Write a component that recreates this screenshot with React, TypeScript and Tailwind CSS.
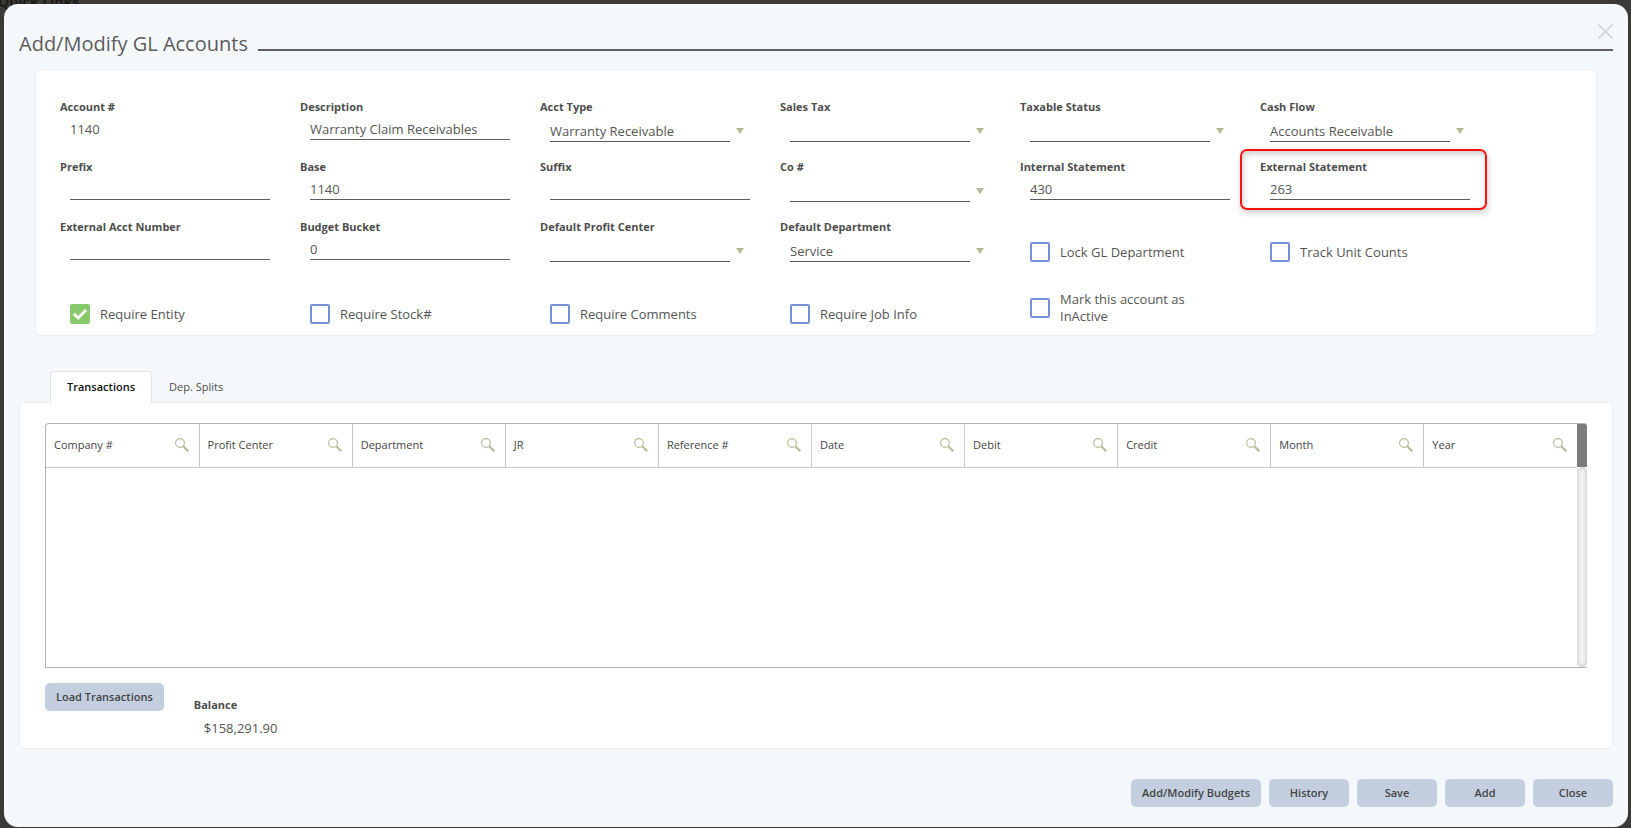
import { useId, useState } from "react";
import type { ReactNode } from "react";

const labelClass = "block text-[11px] leading-4 font-bold text-[#4d4d4d]";
const valueClass = "text-[13px] text-[#555]";

function TextField({ label, value = "", readOnly = false }: { label: string; value?: string; readOnly?: boolean }) {
  const id = useId();
  return (
    <div className="flex flex-col">
      <label htmlFor={id} className={labelClass}>{label}</label>
      <input
        id={id}
        type="text"
        defaultValue={value}
        readOnly={readOnly}
        className={`mt-1 ml-[10px] h-[21px] w-[200px] rounded-none border-b bg-transparent p-0 outline-none ${readOnly ? "border-transparent" : "border-[#5c5c5c]"} ${valueClass}`}
      />
    </div>
  );
}

function SelectField({ label, value = "" }: { label: string; value?: string }) {
  const id = useId();
  return (
    <div className="flex flex-col">
      <label htmlFor={id} className={labelClass}>{label}</label>
      <div className="mt-1 ml-[10px] flex items-center">
        <select
          id={id}
          defaultValue={value}
          className={`h-[23px] w-[180px] appearance-none rounded-none border-b border-[#5c5c5c] bg-transparent px-0 pt-[3px] pb-0 outline-none ${valueClass}`}
        >
          <option value={value}>{value}</option>
        </select>
        <svg aria-hidden="true" className="ml-[6px] h-[6px] w-2 fill-[#b3ba94]" viewBox="0 0 8 6">
          <path d="M0 0h8L4 6z" />
        </svg>
      </div>
    </div>
  );
}

function CheckField({ label, checked = false }: { label: string; checked?: boolean }) {
  return (
    <label className={`ml-[10px] flex w-[180px] items-center gap-[10px] leading-[17px] ${valueClass}`}>
      <span className="grid shrink-0">
        <input
          type="checkbox"
          defaultChecked={checked}
          className="peer col-start-1 row-start-1 size-5 appearance-none rounded-[2px] border-2 border-[#7491d6] bg-white checked:border-[#86ca6b] checked:bg-[#86ca6b]"
        />
        <svg
          aria-hidden="true"
          viewBox="0 0 20 20"
          className="pointer-events-none invisible col-start-1 row-start-1 size-5 fill-none stroke-white stroke-[2.8] peer-checked:visible"
        >
          <path d="M3.8 9.8l4.4 4.2L16 6" />
        </svg>
      </span>
      <span>{label}</span>
    </label>
  );
}

function Button({ children }: { children: ReactNode }) {
  return (
    <button type="button" className="h-7 min-w-20 rounded-[5px] bg-[#c3cfdf] px-[11px] text-[11px] font-semibold text-[#444]">
      {children}
    </button>
  );
}

function SearchIcon() {
  return (
    <svg aria-hidden="true" viewBox="0 0 14 14" className="size-[14px] fill-none stroke-[#b5bb98]">
      <circle cx="5" cy="5" r="4.4" strokeWidth="1.1" />
      <path d="M8.3 8.3L13.3 13.3" strokeWidth="2" />
    </svg>
  );
}

const columns = ["Company #", "Profit Center", "Department", "JR", "Reference #", "Date", "Debit", "Credit", "Month", "Year"];

function TransactionsTable() {
  return (
    <div className="flex h-[245px]">
      <div className="flex-1 rounded-tl-[4px] border border-r-0 border-[#b4b4b4]">
        <table className="w-full table-fixed border-collapse">
          <thead>
            <tr className="h-[43px] border-b border-[#c8c8c8]">
              {columns.map((name) => (
                <th key={name} scope="col" className="border-r border-[#c8c8c8] pr-[10px] pl-2 text-left text-[11px] font-normal text-[#444] last:border-r-0">
                  <div className="flex items-center justify-between">
                    <span>{name}</span>
                    <button type="button" aria-label={`Search ${name}`}><SearchIcon /></button>
                  </div>
                </th>
              ))}
            </tr>
          </thead>
          <tbody />
        </table>
      </div>
      <div className="flex w-[10px] flex-col border-b border-[#b4b4b4]">
        <div className="h-11 rounded-tr-[3px] border-t border-[#b4b4b4] bg-[#7c7c7c]" />
        <div className="flex-1 rounded-[5px] bg-[#f3f3f3] shadow-[inset_0_0_4px_#b8b8b8]" />
      </div>
    </div>
  );
}

export default function App() {
  const [tab, setTab] = useState("Transactions");
  return (
    <div className="relative min-h-screen overflow-hidden bg-[#3b3a38] pt-1 pr-[3px] pb-px pl-1 font-['Open_Sans',sans-serif]">
      <div aria-hidden="true" className="absolute -top-2 -left-[2px] text-[14px] leading-5 font-bold text-[#1c1b1a]">Quick Links</div>
      <main className="relative flex min-h-[calc(100vh-5px)] flex-col rounded-[14px] bg-[#f4f8fb] px-[15px]">
        <header className="flex h-[65px] items-start">
          <h1 className="pt-[25px] text-[20px] leading-[30px] text-[#5c5c5c]">Add/Modify GL Accounts</h1>
          <div className="mt-[45px] ml-[10px] h-[2px] flex-1 bg-[#5f5f5f]" />
          <button type="button" aria-label="Close dialog" className="mt-5 -ml-[15px] size-[15px]">
            <svg aria-hidden="true" viewBox="0 0 15 15" className="size-[15px] fill-none stroke-[#d3d6d8] stroke-[1.6]">
              <path d="M0.5 0.5l14 14M14.5 0.5l-14 14" />
            </svg>
          </button>
        </header>

        <section className="mx-4 h-[267px] rounded-[5px] border border-[#eceff1] bg-white px-6 pt-[29px]">
          <div className="grid grid-cols-[repeat(6,240px)] grid-rows-[60px_60px_60px_60px]">
            <TextField label="Account #" value="1140" readOnly />
            <TextField label="Description" value="Warranty Claim Receivables" />
            <SelectField label="Acct Type" value="Warranty Receivable" />
            <SelectField label="Sales Tax" />
            <SelectField label="Taxable Status" />
            <SelectField label="Cash Flow" value="Accounts Receivable" />
            <TextField label="Prefix" />
            <TextField label="Base" value="1140" />
            <TextField label="Suffix" />
            <SelectField label="Co #" />
            <TextField label="Internal Statement" value="430" />
            <div className="relative">
              <TextField label="External Statement" value="263" />
              <div className="pointer-events-none absolute -top-[10px] -left-5 h-[61px] w-[247px] rounded-[7px] border-2 border-[#f5120f] shadow-[1px_3px_6px_rgba(0,0,0,0.2),inset_1px_3px_6px_rgba(0,0,0,0.2)]" />
            </div>
            <TextField label="External Acct Number" />
            <TextField label="Budget Bucket" value="0" />
            <SelectField label="Default Profit Center" />
            <SelectField label="Default Department" value="Service" />
            <div className="flex pt-[6px]"><CheckField label="Lock GL Department" /></div>
            <div className="flex pt-[6px]"><CheckField label="Track Unit Counts" /></div>
            <div className="flex pt-[10px]"><CheckField label="Require Entity" checked /></div>
            <div className="flex pt-[10px]"><CheckField label="Require Stock#" /></div>
            <div className="flex pt-[10px]"><CheckField label="Require Comments" /></div>
            <div className="flex pt-[10px]"><CheckField label="Require Job Info" /></div>
            <div className="flex pb-[2px]"><CheckField label="Mark this account as InActive" /></div>
          </div>
        </section>

        <div role="tablist" className="mt-[35px] ml-[31px] flex h-[31px]">
          {["Transactions", "Dep. Splits"].map((name) => (
            <button
              key={name}
              type="button"
              role="tab"
              aria-selected={tab === name}
              onClick={() => setTab(name)}
              className={`rounded-t-[4px] border border-b-0 px-4 text-[11px] ${tab === name ? "relative -mb-px border-[#dfe3e6] bg-white font-semibold text-[#111]" : "border-transparent text-[#4d4d4d]"}`}
            >
              {name}
            </button>
          ))}
        </div>
        <section className="h-[347px] rounded-[5px] border border-[#eceff1] bg-white pt-5 pr-[25px] pl-[25px]">
          <TransactionsTable />
          <div className="flex items-start pt-[15px]">
            <Button>Load Transactions</Button>
            <div className="ml-[30px] pt-[14px]">
              <div className={labelClass}>Balance</div>
              <div className={`mt-[5px] ml-[10px] leading-5 ${valueClass}`}>$158,291.90</div>
            </div>
          </div>
        </section>

        <footer className="flex justify-end gap-2 pt-[30px] pb-5">
          <Button>Add/Modify Budgets</Button>
          <Button>History</Button>
          <Button>Save</Button>
          <Button>Add</Button>
          <Button>Close</Button>
        </footer>
      </main>
    </div>
  );
}
